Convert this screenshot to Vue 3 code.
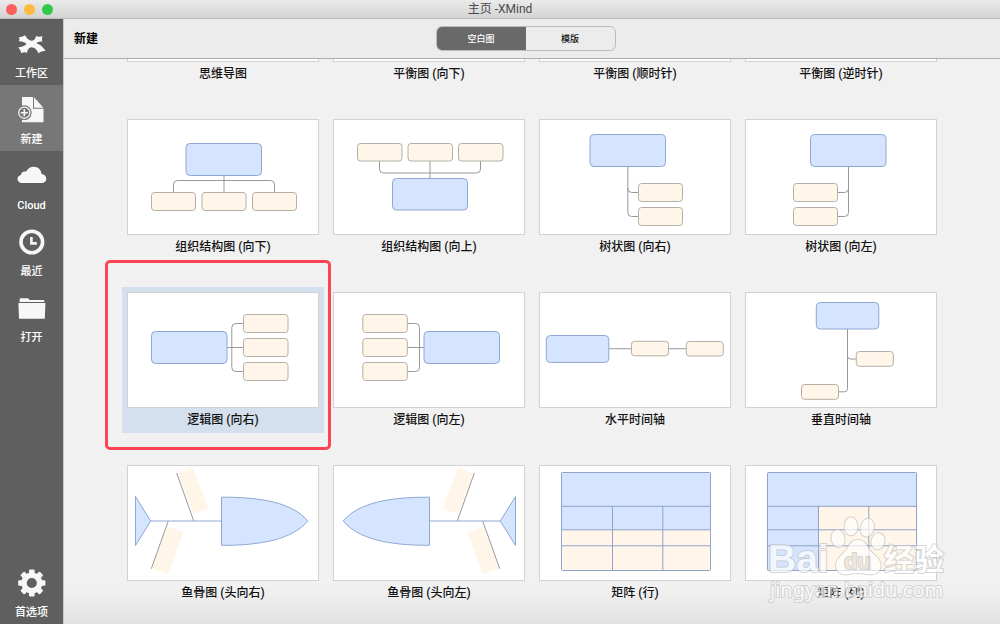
<template>
    <div class="window">
        <header class="titlebar">
            <div class="lights">
                <button class="light close" aria-label="关闭"></button>
                <button class="light minimize" aria-label="最小化"></button>
                <button class="light zoom" aria-label="缩放"></button>
            </div>
            <div class="title">主页 -XMind</div>
        </header>
        <div class="body">
            <nav class="sidebar">
                <button class="item">
                    <svg viewBox="0 0 32 32">
                        <path class="fill" d="M9.3 7.2C10.2 10.4 13 12.4 16 12.7C18.3 12.4 19.6 10.8 20 8C22 8.8 24.5 8.8 26.6 8.2C25.8 9.8 25.8 11.6 26.4 13.6C23.6 13.2 21.4 14 20.4 15.2C23.6 16 26.8 18.6 29.6 23C27 23 24.4 23.6 22.2 25.2C21.5 21.8 18.6 19.4 15.4 19.2C12.9 19.6 11.4 21.8 11 24.8C9 23.8 7 24.2 5.2 25.2C4.9 23 3.8 21 2.2 19.2C5.6 19.2 9 17.8 10.6 16C8.8 14.2 6 13.2 2.8 13.2C3.5 12 3.5 10.6 3.1 9.1C5.4 9 7.6 8.4 9.3 7.2Z" />
                    </svg>
                    <span>工作区</span>
                </button>
                <button class="item active">
                    <svg viewBox="0 0 32 32">
                        <path class="fill" d="M6 3H17V14.8H27.5V28.3H6Z" />
                        <path class="fill" d="M18 3.2L27.4 13.8H18Z" />
                        <circle class="badge" cx="8.3" cy="18.7" r="7.4" />
                        <circle class="ring" cx="8.3" cy="18.7" r="5.6" />
                        <path class="plus" d="M8.3 15.2V22.2M4.8 18.7H11.8" />
                    </svg>
                    <span>新建</span>
                </button>
                <button class="item">
                    <svg viewBox="0 0 32 32">
                        <path class="fill" d="M6 23C3.3 23 1.5 21.3 1.5 19C1.5 16.9 3 15.3 5 15C4.9 12.6 7.6 10.8 10 11.8C11.4 8.6 14.4 6.7 17.8 6.7C22.2 6.7 25.3 9.9 25.6 14.1C28.3 14.5 30.3 16.3 30.3 18.7C30.3 21.2 28.4 23 25.7 23Z" />
                    </svg>
                    <span>Cloud</span>
                </button>
                <button class="item">
                    <svg viewBox="0 0 32 32">
                        <circle class="dial" cx="15.8" cy="16" r="10.8" />
                        <path class="hands" d="M15.4 11V17.4H20.8" />
                    </svg>
                    <span>最近</span>
                </button>
                <button class="item">
                    <svg viewBox="0 0 32 32">
                        <path class="fill" d="M3.6 10V7.6Q3.6 6.2 5 6.2H11.8Q13 6.2 13.5 8H27.2Q28.4 8 28.4 9.2V10Z" />
                        <path class="fill" d="M2.4 11H29.4L28.8 26.8H3Z" />
                    </svg>
                    <span>打开</span>
                </button>
                <button class="item last">
                    <svg viewBox="0 0 32 32">
                        <circle class="gear" cx="15.8" cy="16" r="7.8" />
                        <rect
                            v-for="n in 8"
                            :key="n"
                            class="fill"
                            x="13"
                            y="2.4"
                            width="5.6"
                            height="5"
                            rx="1"
                            :transform="`rotate(${n * 45} 15.8 16)`"
                        />
                    </svg>
                    <span>首选项</span>
                </button>
            </nav>
            <main class="main">
                <div class="toolbar">
                    <h1>新建</h1>
                    <div class="tabs">
                        <button
                            v-for="name in tabs"
                            :key="name"
                            :class="{ on: tab === name }"
                            @click="tab = name"
                        >{{ name }}</button>
                    </div>
                </div>
                <div ref="scroller" class="scroller">
                    <div class="grid">
                        <button
                            v-for="tile in tiles"
                            :key="tile.name"
                            class="tile"
                            :class="{ selected: selected === tile.name }"
                            @click="selected = tile.name"
                        >
                            <svg class="preview" viewBox="1 1 190 114">
                                <path v-if="tile.lines" class="line" :d="tile.lines" />
                                <rect
                                    v-for="(b, i) in tile.main"
                                    :key="'m' + i"
                                    class="blue"
                                    :x="b[0]"
                                    :y="b[1]"
                                    :width="b[2]"
                                    :height="b[3]"
                                    rx="4"
                                />
                                <rect
                                    v-for="(b, i) in tile.subs"
                                    :key="'s' + i"
                                    class="cream"
                                    :x="b[0]"
                                    :y="b[1]"
                                    :width="b[2]"
                                    :height="b[3]"
                                    rx="3"
                                />
                                <g v-if="tile.fish" :transform="tile.fish === 'left' ? 'translate(191 0) scale(-1 1)' : null">
                                    <path class="flesh" d="M50.7 8.3L66 2.7L81.7 43.3L66.3 49ZM40.7 61.3L56.3 67.3L41.7 109L25 103.7Z" />
                                    <path class="line" d="M49.7 8L66.7 56M41.3 56L24.3 103.7" />
                                    <path class="blue" d="M8.5 31.5L23.7 56L8.5 80.5ZM23.7 56H94.5M94.5 32.2C135 32 166 38 180.7 56C166 74 135 80.5 94.5 80.3Z" />
                                </g>
                                <g v-if="tile.matrix">
                                    <rect class="flesh" x="22.5" y="7.5" width="149" height="98" />
                                    <path class="head" :d="tile.matrix" />
                                    <rect class="rule" x="22.5" y="7.5" width="149" height="98" rx="1" />
                                    <path class="rule" d="M22.5 41.3H171.5M22.5 64.8H171.5M22.5 80.8H171.5M73.5 41.3V105.5M123.8 41.3V105.5" />
                                </g>
                            </svg>
                            <span class="label">{{ tile.name }}</span>
                        </button>
                    </div>
                </div>
            </main>
        </div>
        <svg class="watermark" viewBox="0 0 190 94">
            <g class="mark">
                <text x="5" y="58" class="bai">Bai</text>
                <ellipse cx="75" cy="24.5" rx="6.5" ry="8.5" transform="rotate(-12 75 24.5)" />
                <ellipse cx="88" cy="12.3" rx="6.5" ry="9" />
                <ellipse cx="104.3" cy="13.7" rx="6.5" ry="9" transform="rotate(14 104.3 13.7)" />
                <ellipse cx="115" cy="27.3" rx="6.5" ry="8" transform="rotate(14 115 27.3)" />
                <path d="M95 26C101 26 103 30 106 35C110 41 118 44 117.6 52C117.3 59 111 61.5 104 60C98 58.8 92 58.8 86 60C79 61.5 73 58.5 73 51C73 44 80 41 84 35C87 30 89 26 95 26Z" />
                <text x="81" y="55" class="du">du</text>
                <text x="121" y="56" class="jy">经验</text>
                <text x="7" y="83" class="url">jingyan.baidu.com</text>
            </g>
        </svg>
    </div>
</template>

<script setup>
import { ref, onMounted } from 'vue';

const tabs = ['空白图', '模版'];
const tab = ref('空白图');
const selected = ref('逻辑图 (向右)');
const scroller = ref(null);

// boxes are [x, y, width, height]
const tiles = [
    { name: '思维导图' },
    { name: '平衡图 (向下)' },
    { name: '平衡图 (顺时针)' },
    { name: '平衡图 (逆时针)' },
    {
        name: '组织结构图 (向下)',
        main: [[59, 24.5, 75.5, 32]],
        subs: [[24.5, 73.5, 44, 18], [75, 73.5, 44, 18], [125.5, 73.5, 44, 18]],
        lines: 'M97 56V74M46.5 74V65.5Q46.5 61.5 50.5 61.5H143.5Q147.5 61.5 147.5 65.5V74',
    },
    {
        name: '组织结构图 (向上)',
        main: [[59.5, 59.5, 75, 31.5]],
        subs: [[24.5, 24.5, 44.5, 17.5], [75, 24.5, 44.5, 17.5], [125.5, 24.5, 44.5, 17.5]],
        lines: 'M97 42V60M46.5 42V50Q46.5 54 50.5 54H143.5Q147.5 54 147.5 50V42',
    },
    {
        name: '树状图 (向右)',
        main: [[51, 15.5, 75.5, 32]],
        subs: [[99.5, 64.5, 44, 18], [99.5, 88.5, 44, 18]],
        lines: 'M88.8 48V69.5Q88.8 73.5 92.8 73.5H100M88.8 69V93.5Q88.8 97.5 92.8 97.5H100',
    },
    {
        name: '树状图 (向左)',
        main: [[65.5, 15.5, 75.5, 32]],
        subs: [[48.5, 64.5, 44, 18], [48.5, 88.5, 44, 18]],
        lines: 'M103.5 48V69.5Q103.5 73.5 99.5 73.5H92M103.5 69V93.5Q103.5 97.5 99.5 97.5H92',
    },
    {
        name: '逻辑图 (向右)',
        main: [[24.5, 39.5, 75.5, 32]],
        subs: [[116.5, 22.5, 44.5, 18], [116.5, 46.5, 44.5, 18], [116.5, 70.5, 44.5, 18]],
        lines: 'M100 55.5H117M117 31.5H108.8Q104.8 31.5 104.8 35.5V75.5Q104.8 79.5 108.8 79.5H117',
    },
    {
        name: '逻辑图 (向左)',
        main: [[91, 39.5, 75.5, 32]],
        subs: [[29.8, 22.5, 44.5, 18], [29.8, 46.5, 44.5, 18], [29.8, 70.5, 44.5, 18]],
        lines: 'M74 55.5H91M74 31.5H82.5Q86.5 31.5 86.5 35.5V75.5Q86.5 79.5 82.5 79.5H74',
    },
    {
        name: '水平时间轴',
        main: [[7.3, 43.5, 62.5, 27]],
        subs: [[92.5, 49.3, 37, 14.5], [147.3, 49.5, 37, 14.5]],
        lines: 'M70 56.7H93M129 56.7H148',
    },
    {
        name: '垂直时间轴',
        main: [[71.3, 10.5, 62.5, 26.5]],
        subs: [[111.3, 59.5, 37, 14.8], [56.5, 92.5, 37, 14.8]],
        lines: 'M102.5 37V64Q102.5 67 105.5 67H112M102.5 64V96.8Q102.5 99.8 99.5 99.8H93',
    },
    { name: '鱼骨图 (头向右)', fish: 'right' },
    { name: '鱼骨图 (头向左)', fish: 'left' },
    { name: '矩阵 (行)', matrix: 'M22.5 7.5H171.5V64.8H22.5Z' },
    { name: '矩阵 (列)', matrix: 'M22.5 7.5H171.5V41.3H73.5V105.5H22.5Z' },
];

onMounted(() => {
    scroller.value.scrollTop = scroller.value.scrollHeight;
});
</script>

<style>
body {
    margin: 0;
}
</style>

<style scoped>
.window {
    position: relative;
    display: flex;
    flex-direction: column;
    height: 100vh;
    overflow: hidden;
    font-family: Roboto, "Noto Sans CJK SC", sans-serif;
    color: #111;
    background: #f1f1f1;
}

button {
    padding: 0;
    border: 0;
    background: none;
    font: inherit;
    color: inherit;
}

.titlebar {
    display: grid;
    grid-template-columns: 1fr auto 1fr;
    align-items: center;
    box-sizing: border-box;
    height: 19px;
    border-bottom: 1px solid #b9b9b9;
    background: linear-gradient(#ebebeb, #d3d3d3);
}

.lights {
    display: flex;
    gap: 7px;
    padding-left: 6px;
}

.light {
    width: 11px;
    height: 11px;
    border-radius: 50%;
}

.close {
    background: #fc605c;
}

.minimize {
    background: #fdbc40;
}

.zoom {
    background: #34c84a;
}

.title {
    font-size: 12px;
    line-height: 18px;
    color: #4a4a4a;
}

.body {
    display: flex;
    flex: 1;
    min-height: 0;
}

.sidebar {
    display: flex;
    flex-direction: column;
    flex: 0 0 63px;
    border-right: 1px solid #c8c8c8;
    background: #5f5f5f;
}

.item {
    display: flex;
    flex-direction: column;
    align-items: center;
    gap: 6px;
    box-sizing: border-box;
    height: 66px;
    padding-top: 9px;
    font-size: 11px;
    font-weight: 500;
    line-height: 16px;
    color: #fff;

    & svg {
        width: 32px;
        height: 32px;
    }

    &.active {
        background: #777;
    }

    &.last {
        margin-top: auto;
    }
}

.fill {
    fill: #f7f7f7;
}

.badge {
    fill: #777;
}

.ring,
.plus,
.dial,
.hands,
.gear {
    fill: none;
    stroke: #f7f7f7;
}

.ring {
    stroke-width: 1.2;
}

.plus {
    stroke-width: 1.6;
}

.dial {
    stroke-width: 3.6;
}

.hands {
    stroke-width: 2.6;
}

.gear {
    stroke-width: 5.4;
}

.main {
    display: flex;
    flex: 1;
    flex-direction: column;
    min-width: 0;
}

.toolbar {
    display: grid;
    grid-template-columns: 1fr auto 1fr;
    align-items: center;
    box-sizing: border-box;
    height: 40px;
    padding: 0 10px;
    border-bottom: 1px solid #b0b0b0;
    background: #ececec;

    & h1 {
        margin: 0;
        font-size: 12px;
        font-weight: 700;
        line-height: 16px;
        color: #000;
    }
}

.tabs {
    display: flex;
    margin-right: 13px;
    border: 1px solid #bcbcbc;
    border-radius: 6px;
    overflow: hidden;

    & button {
        width: 89px;
        height: 23px;
        font-size: 9px;
        font-weight: 500;
        line-height: 24px;
    }

    & .on {
        background: #696969;
        color: #fff;
    }
}

.scroller {
    flex: 1;
    min-height: 0;
    overflow-y: auto;
    scrollbar-width: none;
    background: linear-gradient(to top, #e2e2e2, #f1f1f1 36px);
}

.grid {
    display: grid;
    grid-template-columns: repeat(auto-fill, 202px);
    justify-content: center;
    gap: 27px 4px;
    padding: 10px 0 18px;
}

.tile {
    position: relative;
    display: flex;
    flex-direction: column;
    padding: 5px 5px 0;

    &.selected {
        background: #d5e0ee;
    }

    /* red callout around the chosen structure */
    &.selected::after {
        content: "";
        position: absolute;
        inset: -27px -7px -17px -17px;
        border: 3px solid #fc4453;
        border-radius: 5px;
    }
}

.preview {
    display: block;
    box-sizing: border-box;
    width: 192px;
    height: 116px;
    border: 1px solid #d2d2d2;
    background: #fff;
}

.label {
    width: 100%;
    font-size: 12px;
    font-weight: 500;
    line-height: 25px;
    text-align: center;
}

.line {
    fill: none;
    stroke: #999;
}

.blue {
    fill: #d5e5ff;
    stroke: #8fa8d2;
}

.cream {
    fill: #fff5e9;
    stroke: #b4b0a8;
}

.flesh {
    fill: #fff5e9;
}

.head {
    fill: #d5e5ff;
}

.rule {
    fill: none;
    stroke: #8fa2c8;
}

.watermark {
    position: absolute;
    right: 47px;
    bottom: 16px;
    width: 190px;
    height: 94px;
    pointer-events: none;
}

.mark {
    fill: #fff;
    stroke: #c4c4c4;
    stroke-width: 2;
    stroke-linejoin: round;
    paint-order: stroke;
    opacity: 0.7;
}

.bai {
    font: bold 39px "Liberation Sans", sans-serif;
}

.du {
    font: bold 22px "Liberation Sans", sans-serif;
    fill: #e9e2d8;
}

.jy {
    font: bold 30px "Noto Sans CJK SC", sans-serif;
}

.url {
    font: 20px "Noto Sans", sans-serif;
}
</style>
